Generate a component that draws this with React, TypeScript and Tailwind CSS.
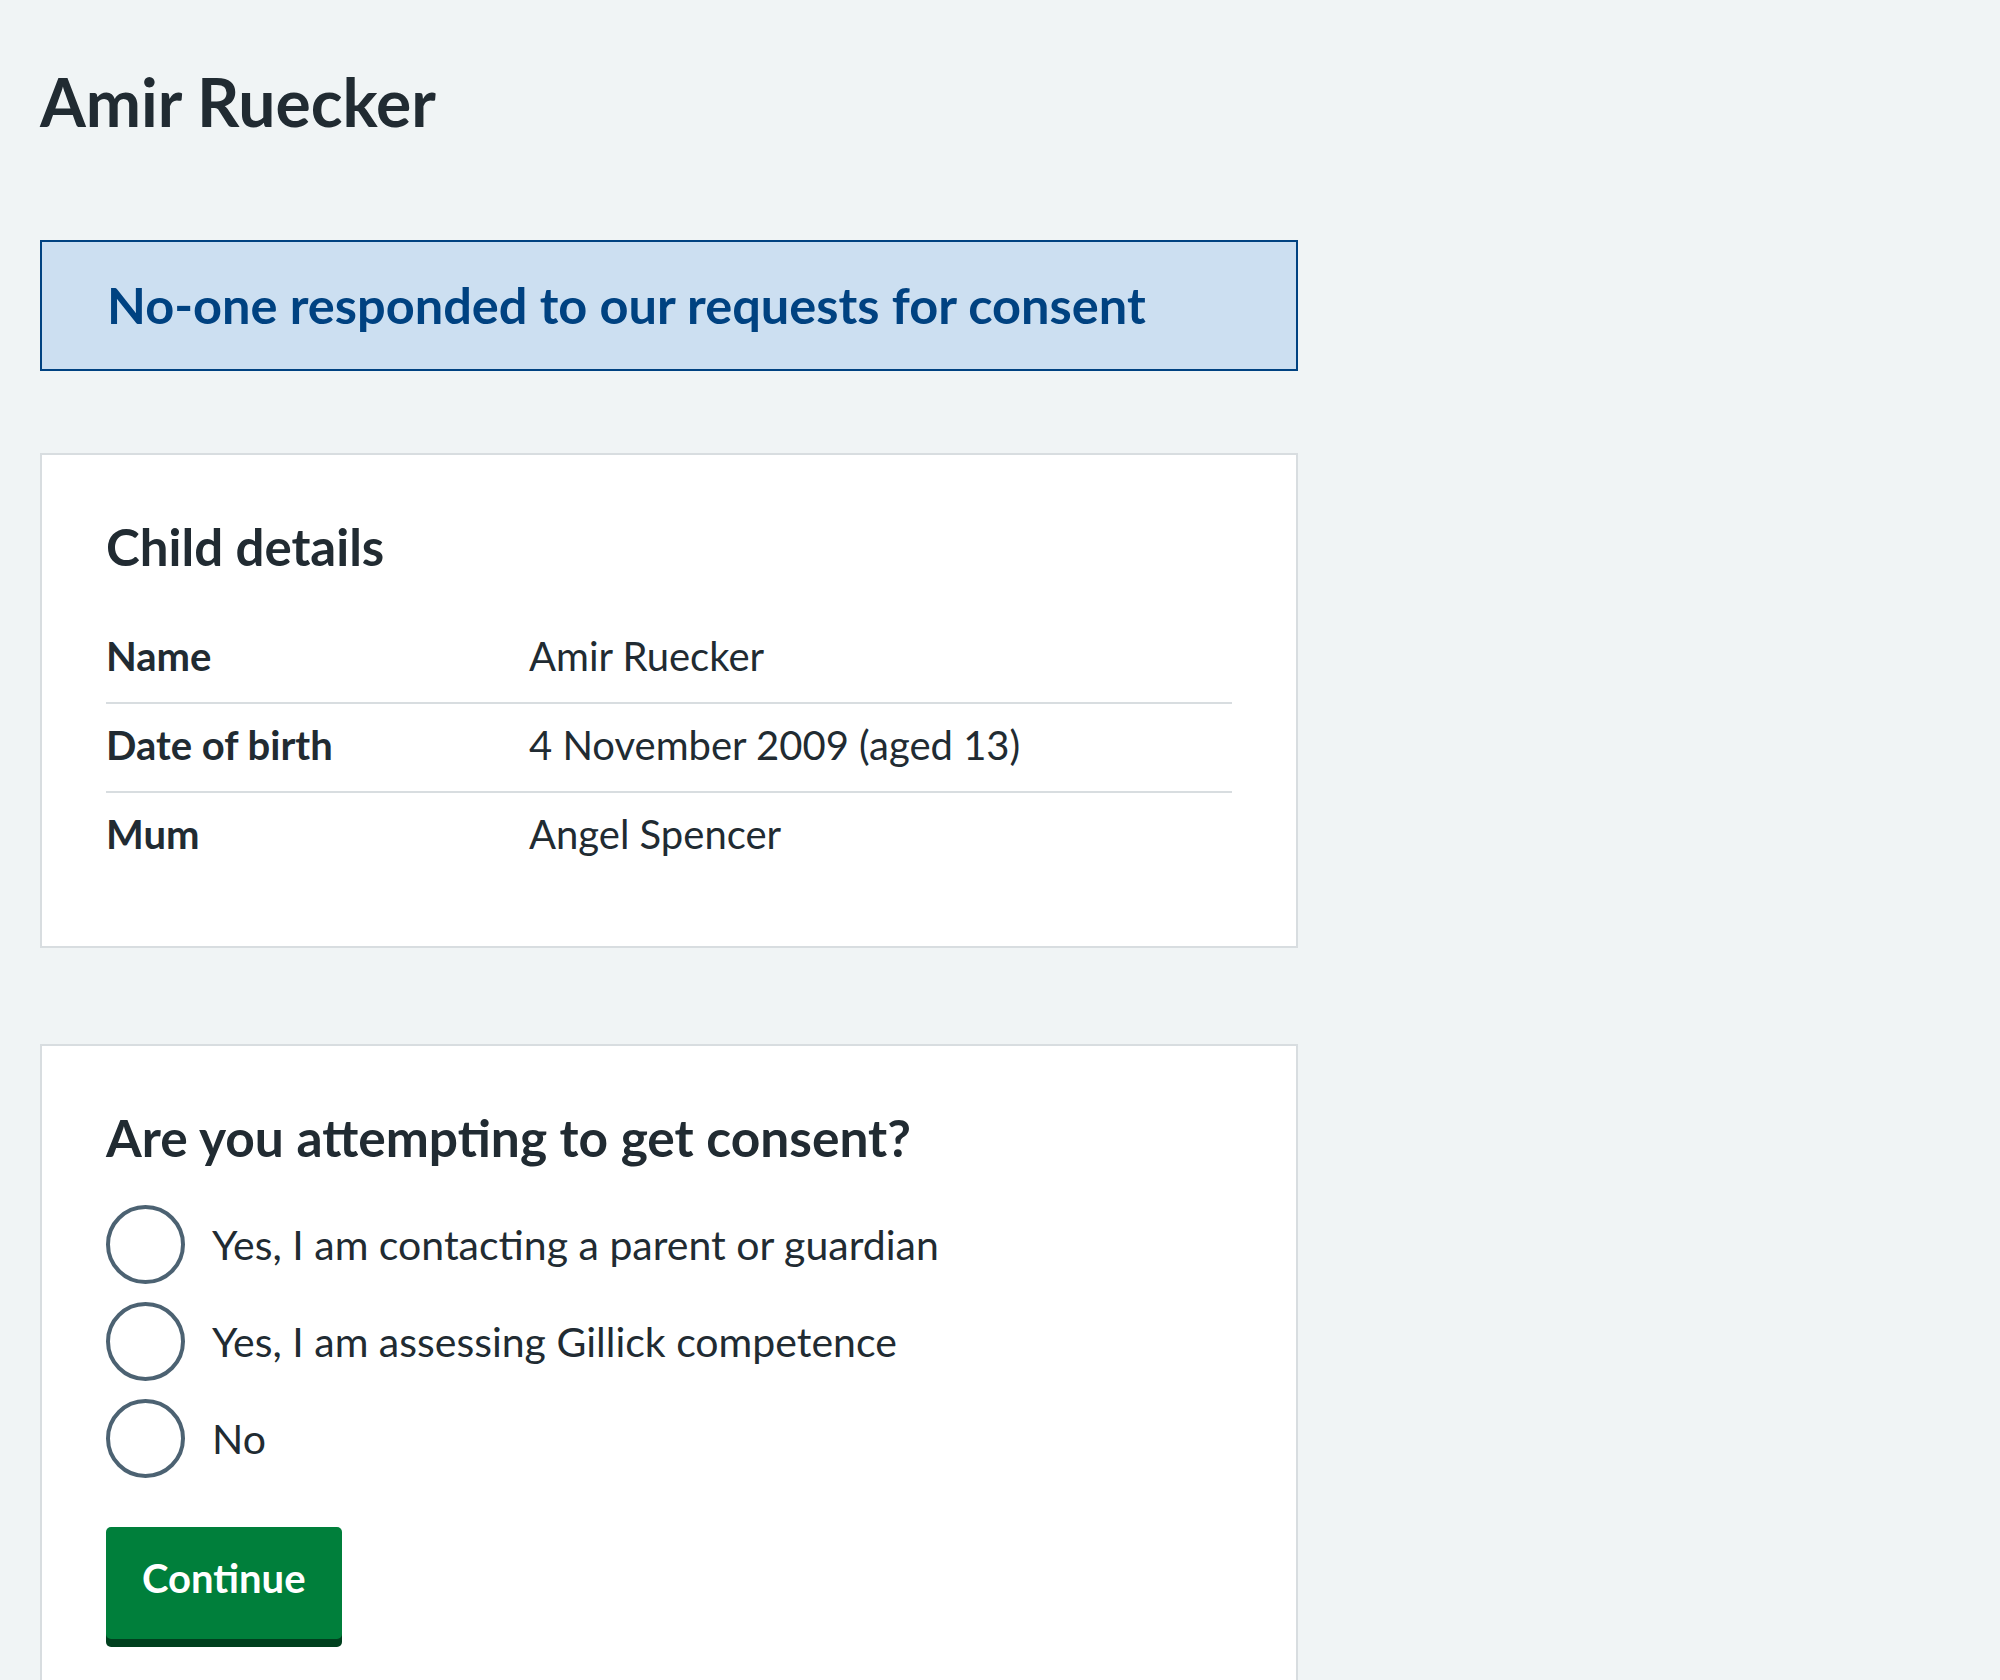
import React from "react";

const rows: [string, string][] = [
  ["Name", "Amir Ruecker"],
  ["Date of birth", "4 November 2009 (aged 13)"],
  ["Mum", "Angel Spencer"],
];

const options = [
  "Yes, I am contacting a parent or guardian",
  "Yes, I am assessing Gillick competence",
  "No",
];

export default function App() {
  return (
    <div className="min-h-screen bg-[#f0f4f5] text-[#212b32] font-['Lato',sans-serif] pl-[40px] pt-[62px] pb-[40px]">
      <div className="w-[1258px]">
        <h1 className="text-[66px] leading-[80px] font-bold mb-[98px]">Amir Ruecker</h1>

        <div className="border-2 border-[#004281] bg-[#ccdff1] pl-[65px] pr-[40px] pt-[33px] pb-[34px]">
          <p className="text-[50.5px] leading-[60px] font-bold text-[#004281]">
            No-one responded to our requests for consent
          </p>
        </div>

        <section className="mt-[82px] border-2 border-[#d8dde0] bg-white px-[64px] pt-[62px] pb-[66px]">
          <h2 className="text-[51px] leading-[60px] font-bold mb-[38px]">Child details</h2>
          <dl>
            {rows.map(([k, v], i) => (
              <div
                key={k}
                className={
                  i < rows.length - 1
                    ? "flex pt-[13px] pb-[18px] border-b-2 border-[#d8dde0]"
                    : "flex pt-[13px] pb-[18px]"
                }
              >
                <dt className="w-[423px] shrink-0 text-[40px] leading-[56px] font-bold">{k}</dt>
                <dd className="text-[40px] leading-[56px]">{v}</dd>
              </div>
            ))}
          </dl>
        </section>

        <section className="mt-[96px] border-2 border-[#d8dde0] bg-white px-[64px] pt-[61px] pb-[64px]">
          <fieldset>
            <legend className="text-[51.5px] leading-[61px] font-bold mb-[37px]">
              Are you attempting to get consent?
            </legend>
            <div className="flex flex-col gap-[18px]">
              {options.map((o) => (
                <label key={o} className="flex items-center gap-[27px]">
                  <span className="w-[79px] h-[79px] shrink-0 rounded-full border-4 border-[#4c6272] bg-white" />
                  <span className="text-[41px] leading-[48px]">{o}</span>
                </label>
              ))}
            </div>
          </fieldset>
          <button className="mt-[49px] bg-[#007f3b] text-white text-[40px] leading-[48px] font-bold px-[36px] pt-[27px] pb-[37px] rounded-[5px] shadow-[0_8px_0_#00401e]">
            Continue
          </button>
        </section>
      </div>
    </div>
  );
}
